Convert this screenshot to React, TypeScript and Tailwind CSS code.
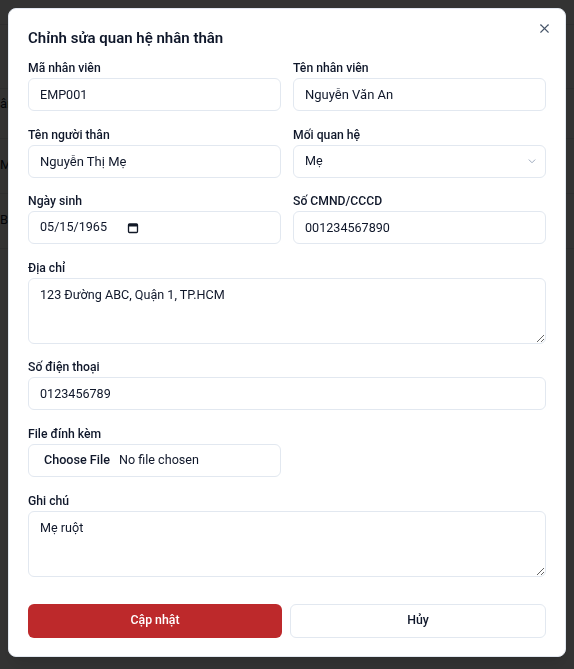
import React from "react";

const font = { fontFamily: 'Roboto, "Noto Sans", sans-serif' };

function Label({ children }: { children: React.ReactNode }) {
  return (
    <div className="h-[18px] text-[12.2px] font-medium leading-[16px] text-[#0f172a]">
      {children}
    </div>
  );
}

const inputCls =
  "flex h-[33px] w-full rounded-md border border-[#e2e8f0] bg-white px-[11px] text-[12.6px] text-[#0f172a] outline-none";

const nameCls =
  "flex h-[33px] w-full rounded-md border border-[#e2e8f0] bg-white px-[11px] text-[13px] text-[#0f172a] outline-none";

const areaCls =
  "block h-[66px] w-full rounded-md border border-[#e2e8f0] bg-white px-[11px] py-[7px] text-[12.6px] text-[#0f172a] outline-none";

export default function App() {
  return (
    <div className="relative h-[669px] w-[574px] overflow-hidden bg-white" style={font}>
      {/* background page */}
      <div className="flex flex-col text-[13px] text-[#0f172a]">
        <div className="h-[25px] border-b border-[#e5e7eb]" />
        <div className="h-[64px] border-b border-[#e5e7eb]" />
        <div className="flex h-[50px] items-center border-b border-[#e5e7eb]">
          <span className="-mt-[20px]">ân</span>
        </div>
        <div className="flex h-[55px] items-center border-b border-[#e5e7eb]">
          <span className="-mt-[2px]">Mẹ</span>
        </div>
        <div className="flex h-[55px] items-center border-b border-[#e5e7eb]">
          <span className="-mt-[2px]">Bà</span>
        </div>
      </div>

      {/* overlay */}
      <div className="fixed inset-0 bg-black/80" />

      {/* dialog */}
      <div className="fixed left-[8px] top-[8px] flex h-[649px] w-[558px] flex-col rounded-lg border border-[#e2e8f0] bg-white px-[19px] pt-5 shadow-lg">
        <button className="absolute right-[13px] top-[12px] text-[#475569]">
          <svg width="15" height="15" viewBox="0 0 24 24" fill="none" stroke="currentColor" strokeWidth="1.8" strokeLinecap="round">
            <path d="M18 6 6 18" />
            <path d="m6 6 12 12" />
          </svg>
        </button>
        <div className="h-[18px] text-[15px] font-semibold leading-[18px] text-[#0f172a]">
          Chỉnh sửa quan hệ nhân thân
        </div>
        <div className="mt-[13px] flex flex-col gap-[15.6px]">
          <div className="grid grid-cols-2 gap-3">
            <div>
              <Label>Mã nhân viên</Label>
              <input className={inputCls} defaultValue="EMP001" />
            </div>
            <div>
              <Label>Tên nhân viên</Label>
              <input className={nameCls} defaultValue="Nguyễn Văn An" />
            </div>
          </div>
          <div className="grid grid-cols-2 gap-3">
            <div>
              <Label>Tên người thân</Label>
              <input className={nameCls} defaultValue="Nguyễn Thị Mẹ" />
            </div>
            <div>
              <Label>Mối quan hệ</Label>
              <div className={inputCls + " items-center justify-between pr-[6px]"}>
                <span>Mẹ</span>
                <svg width="14" height="14" viewBox="0 0 24 24" fill="none" stroke="#94a3b8" strokeWidth="1.6" strokeLinecap="round" strokeLinejoin="round">
                  <path d="m7 10 5 5 5-5" />
                </svg>
              </div>
            </div>
          </div>
          <div className="grid grid-cols-2 gap-3">
            <div>
              <Label>Ngày sinh</Label>
              <div className={inputCls + " items-center"}>
                <span>05/15/1965</span>
                <svg className="ml-[20px]" width="12" height="12" viewBox="0 0 12 12" fill="none">
                  <rect x="1.5" y="2" width="9" height="8.5" rx="1" stroke="#111827" strokeWidth="1.3" />
                  <rect x="1.5" y="2" width="9" height="2.5" fill="#111827" />
                </svg>
              </div>
            </div>
            <div>
              <Label>Số CMND/CCCD</Label>
              <input className={inputCls} defaultValue="001234567890" />
            </div>
          </div>
          <div>
            <Label>Địa chỉ</Label>
            <textarea className={areaCls} defaultValue="123 Đường ABC, Quận 1, TP.HCM" />
          </div>
          <div>
            <Label>Số điện thoại</Label>
            <input className={inputCls} defaultValue="0123456789" />
          </div>
          <div className="grid grid-cols-2 gap-3">
            <div>
              <Label>File đính kèm</Label>
              <div className={inputCls + " items-center text-[12.2px]"}>
                <span className="ml-[4px] font-medium">Choose File</span>
                <span className="ml-[9px]">No file chosen</span>
              </div>
            </div>
          </div>
          <div>
            <Label>Ghi chú</Label>
            <textarea className={areaCls} defaultValue="Mẹ ruột" />
          </div>
        </div>
        <div className="mt-[27px] flex gap-2">
          <button className="h-[34px] flex-1 rounded-md bg-[#bd292b] text-[12.3px] font-medium text-white">
            Cập nhật
          </button>
          <button className="h-[34px] flex-1 rounded-md border border-[#e2e8f0] bg-white text-[12.3px] font-medium text-[#0f172a]">
            Hủy
          </button>
        </div>
      </div>
    </div>
  );
}
